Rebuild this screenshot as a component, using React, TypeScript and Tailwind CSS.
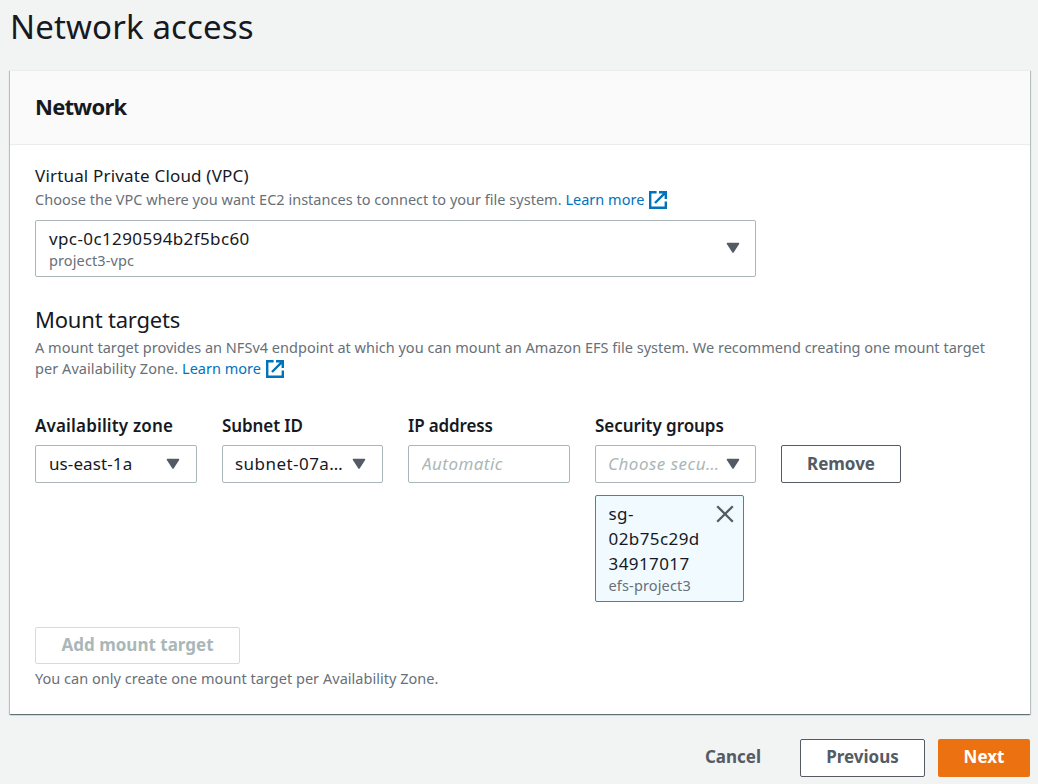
import React from "react";

const Caret = () => (
  <svg width="14" height="12" viewBox="0 0 14 12" className="shrink-0" aria-hidden="true">
    <path d="M1.5 1.5h11L7 10z" fill="#545b64" stroke="#545b64" strokeWidth="1.6" strokeLinejoin="round" />
  </svg>
);

const ExternalIcon = () => (
  <svg width="18" height="18" viewBox="0 0 18 18" fill="none" stroke="#0073bb" strokeWidth="2.4" className="ml-[5px] inline-block shrink-0 align-[-4px]" aria-hidden="true">
    <path d="M7.6 1.2H1.2v15.6h15.6v-6.4" />
    <path d="M10 1.2h6.8v6.8M16.6 1.4L6 12" />
  </svg>
);

const LearnMore = () => (
  <a href="#" className="whitespace-nowrap text-[#0073bb]">
    Learn more
    <ExternalIcon />
  </a>
);

const Select = ({ children, textClass, padding = "pr-4 pl-[13px]" }: { children: React.ReactNode; textClass: string; padding?: string }) => (
  <button className={`flex h-[38px] w-full items-center justify-between rounded-[2px] border border-[#aab7b8] bg-white ${padding}`}>
    <span className={`pb-[2px] whitespace-nowrap ${textClass}`}>{children}</span>
    <Caret />
  </button>
);

const Field = ({ label, width, tracking, children }: { label: string; width: string; tracking: string; children: React.ReactNode }) => (
  <div className={width}>
    <div className={`mb-[7px] h-[25px] text-[17px] leading-[25px] font-semibold whitespace-nowrap ${tracking}`}>{label}</div>
    {children}
  </div>
);

export default function App() {
  return (
    <main className="h-[784px] w-[1038px] overflow-hidden bg-[#f2f3f3] font-['Noto_Sans','Open_Sans',sans-serif] text-[17px] leading-[25px] text-[#16191f]">
      <h1 className="h-[70px] pt-[5px] pl-[10px] text-[33px] leading-[44px] tracking-[0.13px]">Network access</h1>

      <section className="ml-[10px] h-[644px] w-[1020px] border-t border-[#eaeded] bg-white shadow-[0_1px_1px_0_rgba(0,28,36,0.4),1px_1px_1px_0_rgba(0,28,36,0.18),-1px_1px_1px_0_rgba(0,28,36,0.18)]">
        <header className="flex h-[74px] items-center border-b border-[#eaeded] bg-[#fafafa] px-[25px] pb-[3px]">
          <h2 className="text-[22px] leading-[30px] font-bold tracking-[-0.75px]">Network</h2>
        </header>

        <div className="flex flex-col px-[25px] pt-[17px]">
          <label className="h-[27px] leading-[27px] tracking-[0.18px]">Virtual Private Cloud (VPC)</label>
          <p className="h-[22px] text-[14.5px] leading-[20px] tracking-[0.013px] whitespace-nowrap text-[#687078]">
            Choose the VPC where you want EC2 instances to connect to your file system. <LearnMore />
          </p>
          <button className="mt-[9px] flex h-[57px] w-[721px] items-center justify-between rounded-[2px] border border-[#aab7b8] pr-[15px] pb-[2px] pl-[13px] text-left">
            <span className="flex flex-col">
              <span className="h-[24px] leading-[26px] tracking-[0.39px]">vpc-0c1290594b2f5bc60</span>
              <span className="h-[20px] text-[14.5px] leading-[20px] tracking-[0.12px] text-[#687078]">project3-vpc</span>
            </span>
            <Caret />
          </button>

          <h3 className="mt-[27px] h-[31px] text-[22px] leading-[31px] tracking-[-0.2px]">Mount targets</h3>
          <p className="mt-[2px] h-[43px] text-[14.5px] leading-[21px] tracking-[0.013px] whitespace-nowrap text-[#687078]">
            A mount target provides an NFSv4 endpoint at which you can mount an Amazon EFS file system. We recommend creating one mount target
            <br />
            <span className="tracking-[0.06px]">per Availability Zone. </span>
            <LearnMore />
          </p>

          <div className="mt-[33px] flex h-[214px] items-start gap-[25px]">
            <Field label="Availability zone" width="w-[162px]" tracking="tracking-[0.15px]">
              <Select textClass="tracking-[0.1px]">us-east-1a</Select>
            </Field>
            <Field label="Subnet ID" width="w-[161px]" tracking="tracking-[-0.1px]">
              <Select textClass="tracking-[0.45px]" padding="pr-4 pl-[12px]">subnet-07a…</Select>
            </Field>
            <Field label="IP address" width="w-[162px]" tracking="tracking-[-0.15px]">
              <input
                placeholder="Automatic"
                className="block h-[38px] w-full rounded-[2px] border border-[#aab7b8] px-[13px] pb-[2px] tracking-[0.45px] placeholder:text-[#aab7b8] placeholder:italic"
              />
            </Field>
            <Field label="Security groups" width="w-[161px]" tracking="tracking-[-0.05px]">
              <Select textClass="tracking-[0.5px] text-[#aab7b8] italic" padding="pr-[15px] pl-[12px]">
                Choose secu…
              </Select>
              <div className="mt-[12px] flex h-[107px] w-[149px] items-start justify-between rounded-[2px] border border-[#00a1c9] bg-[#f1faff] pt-[5px] pr-[9px] pl-[12.5px]">
                <div>
                  <div className="h-[74px] tracking-[0.42px]">
                    sg-
                    <br />
                    02b75c29d
                    <br />
                    34917017
                  </div>
                  <div className="h-[20px] text-[14.5px] leading-[20px] tracking-[0.15px] text-[#687078]">efs-project3</div>
                </div>
                <svg width="18" height="18" viewBox="0 0 18 18" fill="none" stroke="#545b64" strokeWidth="2.3" className="mt-[4px] shrink-0" aria-hidden="true">
                  <path d="M1.2 1.2l15.6 15.6M16.8 1.2L1.2 16.8" />
                </svg>
              </div>
            </Field>
            <button className="mt-[32px] h-[38px] w-[120px] rounded-[2px] border border-[#545b64] pb-[2px] font-bold text-[#545b64]">Remove</button>
          </div>

          <button className="h-[37px] w-[205px] rounded-[2px] border border-[#d5dbdb] pb-[2px] font-bold text-[#aab7b8]">Add mount target</button>
          <p className="mt-[4px] h-[20px] text-[14.5px] leading-[20px] tracking-[0.03px] text-[#687078]">You can only create one mount target per Availability Zone.</p>
        </div>
      </section>

      <footer className="mt-[25px] mr-2 flex h-[38px] items-center justify-end font-bold text-[#545b64]">
        <button className="h-[38px] w-[95px] pb-[3px] pl-px">Cancel</button>
        <button className="ml-5 h-[38px] w-[125px] rounded-[2px] border border-[#545b64] bg-white pb-[3px]">Previous</button>
        <button className="ml-[13px] h-[38px] w-[92px] rounded-[2px] bg-[#ec7211] pb-[3px] text-white">Next</button>
      </footer>
    </main>
  );
}
